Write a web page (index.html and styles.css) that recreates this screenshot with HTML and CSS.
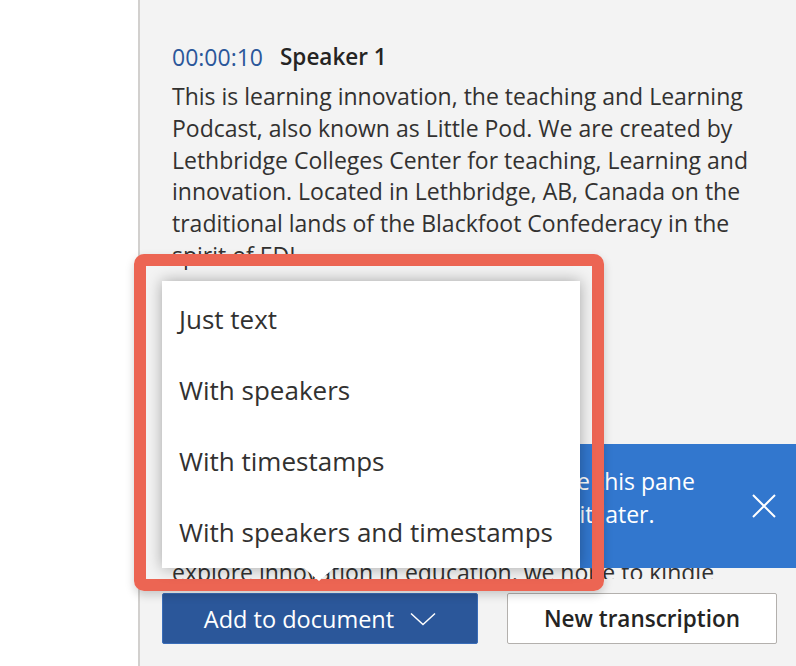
FILE: index.html
```html
<!DOCTYPE html>
<html lang="en">
<head>
<meta charset="utf-8">
<title>Transcribe</title>
<link rel="stylesheet" href="styles.css">
</head>
<body>
<div class="app">
  <div class="doc"></div>
  <div class="pane">
    <div class="transcript">
      <div class="entry">
        <div class="entry-head">
          <span class="time">00:00:10</span>
          <span class="speaker">Speaker 1</span>
        </div>
        <p class="entry-text">This is learning innovation, the teaching and Learning Podcast, also known as Little Pod. We are created by Lethbridge Colleges Center for teaching, Learning and innovation. Located in Lethbridge, AB, Canada on the traditional lands of the Blackfoot Confederacy in the spirit of EDI.</p>
      </div>
      <div class="entry entry-later">
        <div class="entry-head">
          <span class="time">00:00:31</span>
          <span class="speaker">Speaker 1</span>
        </div>
        <p class="entry-text">In every episode we talk with our many guests as we explore innovation in education, we hope to kindle curiosity and connection.</p>
      </div>
    </div>
    <div class="footer">
      <button class="btn btn-primary">Add to document
        <svg class="chev" width="26" height="14" viewBox="0 0 26 14"><path d="M1 1.5 L13 12.5 L25 1.5" fill="none" stroke="#fff" stroke-width="1.5"/></svg>
      </button>
      <button class="btn btn-secondary">New transcription</button>
    </div>

    <div class="toast">
      <p class="toast-text">Feel free to close this pane<br>and get back to it later.</p>
      <svg class="toast-close" width="24" height="24" viewBox="0 0 24 24"><path d="M1 1 L23 23 M23 1 L1 23" stroke="#fff" stroke-width="2"/></svg>
    </div>

    <div class="highlight">
      <ul class="menu">
        <li>Just text</li>
        <li>With speakers</li>
        <li>With timestamps</li>
        <li>With speakers and timestamps</li>
      </ul>
    </div>
  </div>
</div>
</body>
</html>
```

FILE: styles.css
```css
* { box-sizing: border-box; }
html, body { margin: 0; padding: 0; }
body {
  font-family: "Open Sans", "Noto Sans", sans-serif;
  color: #323130;
  background: #fff;
  overflow: hidden;
}
.app {
  display: flex;
  width: 796px;
  height: 666px;
}
.doc {
  width: 138px;
  flex: none;
  background: #fff;
}
.pane {
  position: relative;
  flex: 1;
  background: #f3f3f3;
  border-left: 2px solid #d2d0ce;
  display: flex;
  flex-direction: column;
}
.transcript {
  height: 579px;
  flex: none;
  overflow: hidden;
  padding: 41px 36px 0 32px;
}
.entry-later { margin-top: 214px; }
.entry-head {
  display: flex;
  gap: 17px;
  height: 32px;
  line-height: 32px;
  font-size: 23px;
}
.time { color: #2b579a; }
.speaker { font-weight: 600; color: #252423; font-size: 22.5px; }
.entry-text {
  margin: 8px 0 0;
  font-size: 23px;
  line-height: 31.75px;
  color: #323130;
}
.footer {
  flex: 1;
  display: flex;
  gap: 29px;
  padding: 14px 0 0 22px;
}
.btn {
  height: 51px;
  font-family: inherit;
  border-radius: 2px;
  display: flex;
  align-items: center;
  justify-content: center;
}
.btn-primary {
  width: 316px;
  background: #2b579a;
  color: #fff;
  border: 1px solid #3a6db8;
  gap: 16px;
  font-size: 23.5px;
}
.btn-secondary {
  width: 270px;
  background: #fff;
  color: #252423;
  border: 1.5px solid #b3b0ad;
  font-weight: 600;
  font-size: 22.5px;
}
.toast {
  position: absolute;
  left: 240px;
  right: 0;
  top: 444px;
  height: 124px;
  background: #3277ce;
  color: #fff;
  display: flex;
  align-items: center;
  justify-content: space-between;
  padding: 0 20px 0 29px;
}
.toast-text {
  margin: 0 0 17px;
  font-size: 23px;
  line-height: 33px;
  white-space: nowrap;
}
.toast-close { flex: none; }
.highlight {
  position: absolute;
  left: -6px;
  top: 254px;
  width: 470px;
  height: 337px;
  border: 12px solid #ec6553;
  border-radius: 10px;
  padding: 15px 12px 12px 16px;
  box-shadow: 0 4px 10px rgba(0,0,0,0.18);
}
.menu {
  position: relative;
  list-style: none;
  margin: 0;
  padding: 3px 0 0;
  height: 287px;
  background: #fff;
  box-shadow: 0 0 14px rgba(0,0,0,0.32);
}
.menu::after {
  content: "";
  position: absolute;
  left: 142px;
  bottom: -13px;
  border-left: 15px solid transparent;
  border-right: 15px solid transparent;
  border-top: 13px solid #fff;
}
.menu li {
  height: 71px;
  line-height: 71px;
  padding-left: 17px;
  font-size: 26px;
  color: #323130;
  white-space: nowrap;
}
```
